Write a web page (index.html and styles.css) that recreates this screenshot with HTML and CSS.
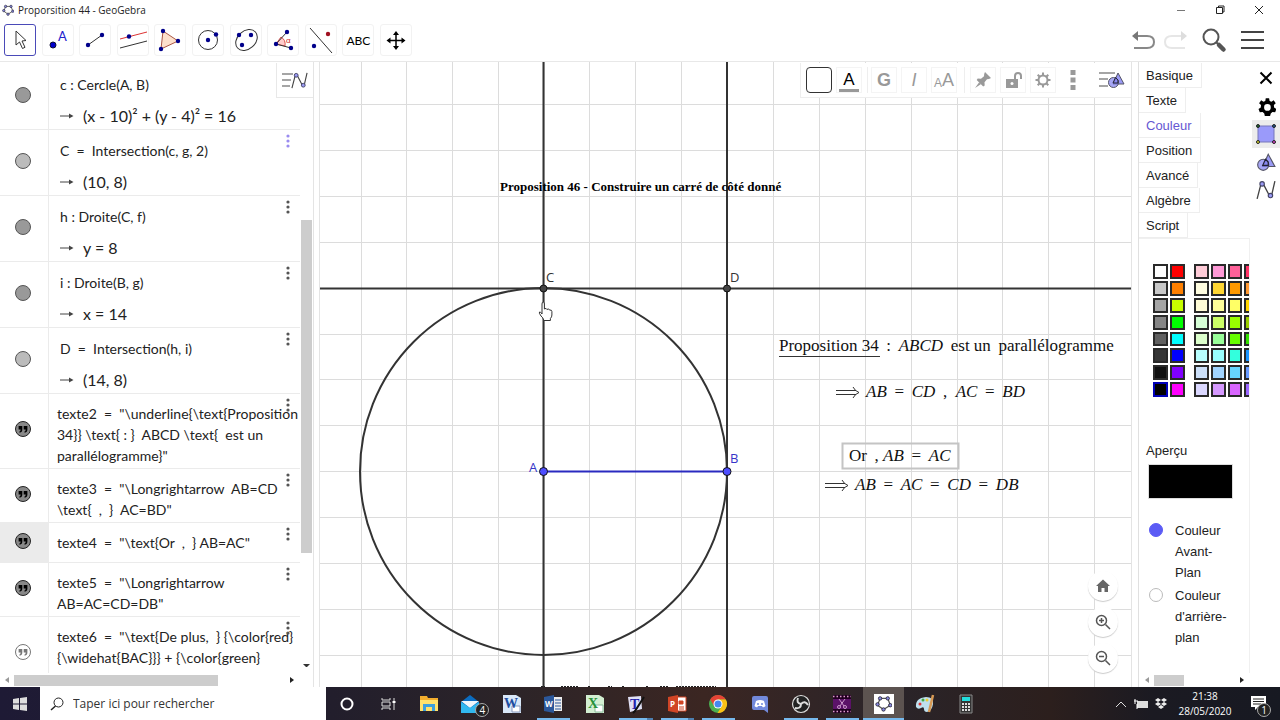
FILE: index.html
```html
<!DOCTYPE html>
<html lang="fr">
<head>
    <meta charset="UTF-8">
    <meta name="viewport" content="width=device-width, initial-scale=1.0">
    <title>Proporsition 44 - GeoGebra</title>
    <link rel="stylesheet" href="styles.css">
</head>
<body>
    <!-- Shared icons -->
    <svg class="sprite" aria-hidden="true">
        <symbol id="ggb" viewBox="0 0 20 20">
            <path d="M6 4 15 4 18 12 10 17 3 12Z" fill="none" stroke="#555" stroke-width="1.5"/>
            <g fill="#8a8ae0" stroke="#223" stroke-width="1"><circle cx="6" cy="4" r="2"/><circle cx="15" cy="4" r="2"/><circle cx="18" cy="12" r="2"/><circle cx="10" cy="17" r="2"/><circle cx="3" cy="11" r="2"/></g>
        </symbol>
        <symbol id="quote" viewBox="0 0 16 16">
            <path d="M3 4.500h4.200v4q0 3.200-3 3.700l-.5-1.200q1.600-.4 1.600-2.400H3zM8.800 4.500H13v4q0 3.200-3 3.700l-.5-1.200q1.600-.4 1.600-2.400H8.800z"/>
        </symbol>
        <symbol id="arrow" viewBox="0 0 14 8">
            <path d="M0 4h12" fill="none" stroke="#444"/><path d="M9 1.500 13.500 4 9 6.500Z" fill="#444"/>
        </symbol>
        <symbol id="dots" viewBox="0 0 4 14">
            <circle cx="2" cy="2" r="1.600"/><circle cx="2" cy="7" r="1.600"/><circle cx="2" cy="12" r="1.600"/>
        </symbol>
        <symbol id="shapes" viewBox="0 0 18 18">
            <path d="M11 2 17 13H6Z" fill="#9a9af5" stroke="#556"/><circle cx="6.500" cy="11.500" r="5" fill="#8080f0" fill-opacity=".7" stroke="#556"/><path d="M8.500 6.500 11 9v3H6Z" fill="none" stroke="#223"/>
        </symbol>
        <symbol id="curve" viewBox="0 0 18 18">
            <path d="M1 17 4.500 3.500h2L12 14h2L17 1" fill="none" stroke="#444" stroke-width="1.200" stroke-linejoin="round"/>
            <circle cx="5.500" cy="3.500" r="2" fill="#9a9af5" stroke="#446"/><circle cx="13" cy="14" r="2" fill="#9a9af5" stroke="#446"/>
        </symbol>
        <symbol id="gear" viewBox="0 0 24 24">
            <path fill-rule="evenodd" d="M10 1h4l.6 3.200 2.200 1L19.500 3.400 22 7l-2.300 2.200.3 2.800 2.800 1.800-1.500 4-3.300-.3-2 1.700L15 23H9l-.8-3.700-2-1.700-3.400.3-1.500-4L4 12l.3-2.800L2 7l2.500-3.600 2.700 1.800 2.200-1zM12 8a4 4 0 1 0 0 8 4 4 0 1 0 0-8z"/>
        </symbol>
    </svg>

    <header class="titlebar">
        <svg class="app-icon"><use href="#ggb"/></svg>
        <h1>Proporsition 44 - GeoGebra</h1>
        <div class="window-buttons">
            <button aria-label="Réduire"><svg width="10" height="10"><path d="M1 5.500h8" stroke="#777"/></svg></button>
            <button aria-label="Restaurer"><svg width="10" height="10"><path d="M1.500 2.500h6v6h-6zM3.500 2.500v-1.500h5.500v6h-1.500" fill="none" stroke="#222"/></svg></button>
            <button aria-label="Fermer"><svg width="10" height="10"><path d="M1 1l8 8M9 1L1 9" stroke="#222"/></svg></button>
        </div>
    </header>

    <nav class="toolbar">
        <div class="tools">
            <button class="selected" aria-label="Déplacer"><svg viewBox="0 0 30 30"><path d="M11 6v14l3.500-3 3 6.500 2.500-1.200-3-6.300 4-.5z" fill="#fff" stroke="#333"/></svg></button>
            <button aria-label="Point"><svg viewBox="0 0 30 30"><circle cx="10" cy="20" r="3" fill="#00c" stroke="#113"/><text class="tool-a" x="15" y="16">A</text></svg></button>
            <button aria-label="Segment"><svg viewBox="0 0 30 30"><path d="M8 20 22 10" stroke="#333"/><g fill="#00008b"><circle cx="8" cy="20" r="2.200"/><circle cx="22" cy="10" r="2.200"/></g></svg></button>
            <button aria-label="Parallèle"><svg viewBox="0 0 30 30"><path d="M2 14 29 7" stroke="#d33"/><path d="M2 23 29 16" stroke="#333"/><circle cx="11" cy="11.500" r="2.200" fill="#00008b"/></svg></button>
            <button aria-label="Polygone"><svg viewBox="0 0 30 30"><path d="M8 6 23 16 6 24Z" fill="#fde0cc" stroke="#a54"/><g fill="#00008b"><circle cx="8" cy="6" r="2.200"/><circle cx="23" cy="16" r="2.200"/><circle cx="6" cy="24" r="2.200"/></g></svg></button>
            <button aria-label="Cercle"><svg viewBox="0 0 30 30"><circle cx="15" cy="15" r="9.500" fill="none" stroke="#333"/><g fill="#00008b"><circle cx="15" cy="15" r="2.200"/><circle cx="23" cy="9.500" r="2.200"/></g></svg></button>
            <button aria-label="Ellipse"><svg viewBox="0 0 30 30"><ellipse cx="15.500" cy="15" rx="12" ry="9" transform="rotate(-42 15.500 15)" fill="none" stroke="#333"/><g fill="#00008b"><circle cx="8" cy="10" r="2.200"/><circle cx="20" cy="10" r="2.200"/><circle cx="11" cy="20" r="2.200"/></g></svg></button>
            <button aria-label="Angle"><svg viewBox="0 0 30 30"><path d="M8 19 13 12q5 3 4 9z" fill="#fcc" stroke="#d55"/><path d="M19 7 8 19 23 23" fill="none" stroke="#333"/><g fill="#00008b"><circle cx="19" cy="7" r="2.200"/><circle cx="8" cy="19" r="2.200"/><circle cx="23" cy="23" r="2.200"/></g><text class="tool-alpha" x="18" y="18">α</text></svg></button>
            <button aria-label="Symétrie"><svg viewBox="0 0 30 30"><path d="M4 3 26 28" stroke="#333"/><circle cx="22" cy="9" r="2.200" fill="#a01020"/><circle cx="8" cy="21" r="2.200" fill="#00008b"/></svg></button>
            <button aria-label="Texte" class="abc">ABC</button>
            <button aria-label="Déplacer la vue"><svg viewBox="0 0 30 30"><path d="M15 8v15M8 15.500h15" stroke="#000" stroke-width="1.500"/><path d="M15 6l3 4h-6zM15 25l3-4h-6zM5.500 15.500l4-3v6zM24.500 15.500l-4-3v6z"/></svg></button>
        </div>
        <div class="actions">
            <button aria-label="Annuler"><svg width="26" height="22" viewBox="0 0 26 22"><path d="M5 7h11q7 0 7 6t-7 6H3" fill="none" stroke="#888" stroke-width="2"/><path d="M1 7l6-5v10z" fill="#777"/></svg></button>
            <button aria-label="Rétablir"><svg width="26" height="22" viewBox="0 0 26 22"><path d="M19 7H9q-7 0-7 6t7 6h13" fill="none" stroke="#e6e6e6" stroke-width="2"/><path d="M24 7l-6-5v10z" fill="#ddd"/></svg></button>
            <button aria-label="Rechercher"><svg width="26" height="26" viewBox="0 0 26 26"><circle cx="10" cy="10" r="7.500" fill="none" stroke="#555" stroke-width="2"/><path d="M15 15l3 3" stroke="#555" stroke-width="2"/><path d="M18 18l4.500 4.500" stroke="#555" stroke-width="4.500" stroke-linecap="round"/></svg></button>
            <button aria-label="Menu"><svg width="26" height="20" viewBox="0 0 26 20"><path d="M2 2h23M2 10h23M2 18h23" stroke="#444" stroke-width="2"/></svg></button>
        </div>
    </nav>

    <main class="workspace">
        <section class="algebra">
            <div class="algebra-body">
                <ul class="rows">
                    <li class="row def"><i class="marble dark"></i><div>c : Cercle(A, B)<span class="value"><svg><use href="#arrow"/></svg>(x - 10)² + (y - 4)² = 16</span></div></li>
                    <li class="row def"><i class="marble"></i><div>C &nbsp;=&nbsp; Intersection(c, g, 2)<span class="value"><svg><use href="#arrow"/></svg>(10, 8)</span></div><button class="more active" aria-label="Plus"><svg><use href="#dots"/></svg></button></li>
                    <li class="row def"><i class="marble dark"></i><div>h : Droite(C, f)<span class="value"><svg><use href="#arrow"/></svg>y = 8</span></div><button class="more" aria-label="Plus"><svg><use href="#dots"/></svg></button></li>
                    <li class="row def"><i class="marble dark"></i><div>i : Droite(B, g)<span class="value"><svg><use href="#arrow"/></svg>x = 14</span></div><button class="more" aria-label="Plus"><svg><use href="#dots"/></svg></button></li>
                    <li class="row def"><i class="marble"></i><div>D &nbsp;=&nbsp; Intersection(h, i)<span class="value"><svg><use href="#arrow"/></svg>(14, 8)</span></div><button class="more" aria-label="Plus"><svg><use href="#dots"/></svg></button></li>
                    <li class="row"><i class="marble text"><svg><use href="#quote"/></svg></i><div>texte2 &nbsp;= &nbsp;"\underline{\text{Proposition<br>34}} \text{ : } &nbsp;ABCD \text{ &nbsp;est un<br>parallélogramme}"</div><button class="more" aria-label="Plus"><svg><use href="#dots"/></svg></button></li>
                    <li class="row"><i class="marble text"><svg><use href="#quote"/></svg></i><div>texte3 &nbsp;= &nbsp;"\Longrightarrow &nbsp;AB=CD<br>\text{ &nbsp;, &nbsp;} &nbsp;AC=BD"</div><button class="more" aria-label="Plus"><svg><use href="#dots"/></svg></button></li>
                    <li class="row current"><i class="marble text"><svg><use href="#quote"/></svg></i><div>texte4 &nbsp;= &nbsp;"\text{Or &nbsp;, &nbsp;} AB=AC"</div><button class="more" aria-label="Plus"><svg><use href="#dots"/></svg></button></li>
                    <li class="row"><i class="marble text"><svg><use href="#quote"/></svg></i><div>texte5 &nbsp;= &nbsp;"\Longrightarrow<br>AB=AC=CD=DB"</div><button class="more" aria-label="Plus"><svg><use href="#dots"/></svg></button></li>
                    <li class="row"><i class="marble text off"><svg><use href="#quote"/></svg></i><div>texte6 &nbsp;= &nbsp;"\text{De plus, &nbsp;} {\color{red}<br>{\widehat{BAC}}} + {\color{green}<br>{\widehat{ACD}}} = 180^{\circ}"</div><button class="more" aria-label="Plus"><svg><use href="#dots"/></svg></button></li>
                </ul>
                <div class="vscroll"><span class="thumb"></span><span class="down"></span></div>
            </div>
            <div class="hscroll"><span class="left"></span><span class="thumb"></span><span class="right"></span></div>
            <button class="algebra-style" aria-label="Barre de style"><svg width="28" height="20" viewBox="0 0 28 20"><path d="M1 4h11M1 10h9M1 16h8" stroke="#888" stroke-width="1.500"/><use href="#curve" x="10" y="2" width="17" height="17"/></svg></button>
        </section>

        <section class="graphics">
            <svg class="plane">
                <path class="grid" d="M41.500 0v700M86.500 0v700M132.500 0v700M178.500 0v700M224.500 0v700M269.500 0v700M315.500 0v700M361.500 0v700M407.500 0v700M453.500 0v700M499.500 0v700M545.500 0v700M591.500 0v700M637.500 0v700M682.500 0v700M728.500 0v700M774.500 0v700"/>
                <path class="grid" d="M0 42.500h2000M0 88.500h2000M0 134.500h2000M0 180.500h2000M0 226.500h2000M0 272.500h2000M0 317.500h2000M0 363.500h2000M0 409.500h2000M0 455.500h2000M0 501.500h2000M0 547.500h2000M0 593.500h2000"/>
                <path class="line" d="M223.500 0v700M407 0v700M0 226.500h2000"/>
                <circle class="line" cx="223.500" cy="409.500" r="183.500"/>
                <path class="segment" d="M223.500 409.500h183.500"/>
                <g class="point"><circle cx="223.500" cy="226.500" r="3.500"/><circle cx="407" cy="226.500" r="3.500"/></g>
                <g class="point free"><circle cx="223.500" cy="409.500" r="4"/><circle cx="407" cy="409.500" r="4"/></g>
                <g class="label"><text x="226" y="220">C</text><text x="410" y="220">D</text></g>
                <g class="label free"><text x="209" y="410">A</text><text x="410" y="401">B</text></g>
                <text class="heading" x="180" y="129">Proposition 46 - Construire un carré de côté donné</text>
                <rect class="frame" x="522.500" y="381.500" width="116" height="25"/>
                <g class="math">
                    <text x="459" y="289">Proposition 34 &#8201;:&#8201; <tspan class="var">ABCD</tspan>&#8201; est un&#8201; parallélogramme</text>
                    <text x="546" y="335"><tspan class="var">AB</tspan>&#8201; =&#8201; <tspan class="var">CD</tspan> &#8201;, &#160;<tspan class="var">AC</tspan>&#8201; =&#8201; <tspan class="var">BD</tspan></text>
                    <text x="529" y="399">Or&#8201; , <tspan class="var">AB</tspan>&#8201; =&#8201; <tspan class="var">AC</tspan></text>
                    <text x="535" y="428"><tspan class="var">AB</tspan>&#8201; =&#8201; <tspan class="var">AC</tspan>&#8201; =&#8201; <tspan class="var">CD</tspan>&#8201; =&#8201; <tspan class="var">DB</tspan></text>
                </g>
                <path class="implies" d="M459 294.500h101M516 328.500h20M516 332.500h20M533 325q2 4 6 5.500q-4 1.500-6 5.500M505 421.500h20M505 425.500h20M522 418q2 4 6 5.500q-4 1.500-6 5.500"/>
                <path class="cut" d="M221 624.500h4M241 624.500h18M268 624.500h3M288 624.500h4M302 624.500h3M326 624.500h3M340 624.500h9M356 624.500h40"/>
                <path class="hand" d="M222 252v-10q0-2 1.200-2t1.200 2v5q2-1.500 2.500.5q2-1.500 2.700.6q2-.6 2.300 1.400v3.500q0 2-1.500 3.500v2h-6.400q-1-3-3-4.500q-2.500-3.500-1.500-4t2.500 2z"/>
            </svg>

            <div class="stylebar">
                <div class="group">
                    <button class="swatch" aria-label="Couleur de fond"></button>
                    <button class="text-color" aria-label="Couleur du texte">A</button>
                </div>
                <div class="group format">
                    <button class="bold">G</button>
                    <button class="italic">I</button>
                    <button class="size" aria-label="Taille"><small>A</small>A</button>
                </div>
                <div class="group object">
                    <button aria-label="Épingler"><svg viewBox="0 0 20 20"><path d="M12 2l6 6-2 1-2 .2-2.500 3 .2 3.300-1.500 1L3.700 10l1-1.500 3.300.3 3-2.500.2-2.300zM6 12.500l1.800 1.700L2 18z"/></svg></button>
                    <button aria-label="Verrouiller"><svg viewBox="0 0 20 20"><path d="M3 9h12v9H3z"/><path d="M12 9V6q0-3 3-3t3 3v3" fill="none" stroke="#999" stroke-width="2"/><circle cx="9" cy="13.500" r="1.500" fill="#fff"/></svg></button>
                    <button aria-label="Réglages"><svg viewBox="0 0 20 20"><g fill="none" stroke="#999"><circle cx="10" cy="10" r="4.500" stroke-width="2"/><path d="M10 2.500v3M10 14.500v3M2.500 10h3M14.500 10h3M4.700 4.700l2 2M13.300 13.300l2 2M15.300 4.700l-2 2M6.700 13.300l-2 2" stroke-width="2"/></g></svg></button>
                    <button class="bare" aria-label="Plus"><svg viewBox="0 0 20 20"><path d="M7.500 0h5v5h-5zM7.500 7.500h5v5h-5zM7.500 15h5v5h-5z"/></svg></button>
                </div>
                <button class="bare view" aria-label="Barre de style"><svg width="26" height="20" viewBox="0 0 26 20"><path d="M0 3h16M0 9h9M0 16h9" stroke="#888" stroke-width="1.500"/><use href="#shapes" x="8" y="1" width="18" height="18"/></svg></button>
            </div>

            <div class="zoom-buttons">
                <button aria-label="Vue standard"><svg viewBox="0 0 16 16"><path d="M8 1.500 15 8h-2v6H9.500v-4h-3v4H3V8H1z" fill="#666"/></svg></button>
                <button aria-label="Zoom avant"><svg viewBox="0 0 16 16"><path d="M6.500 4v5M4 6.500h5M10.500 10.500l4.500 4.500" stroke="#555" stroke-width="1.500"/><circle cx="6.500" cy="6.500" r="5" fill="none" stroke="#555" stroke-width="1.500"/></svg></button>
                <button aria-label="Zoom arrière"><svg viewBox="0 0 16 16"><path d="M4 6.500h5M10.500 10.500l4.500 4.500" stroke="#555" stroke-width="1.500"/><circle cx="6.500" cy="6.500" r="5" fill="none" stroke="#555" stroke-width="1.500"/></svg></button>
            </div>
        </section>

        <aside class="settings">
            <div class="properties">
                <div class="tabs">
                    <button>Basique</button>
                    <button>Texte</button>
                    <button class="active">Couleur</button>
                    <button>Position</button>
                    <button>Avancé</button>
                    <button>Algèbre</button>
                    <button>Script</button>
                </div>
                <div class="tab-content">
                    <div class="palette">
                        <div class="colors" id="mainColors"></div>
                        <div class="colors wide" id="moreColors"></div>
                    </div>
                    <p class="preview-title">Aperçu</p>
                    <div class="preview"></div>
                    <label class="choice"><input type="radio" name="layer" checked><span>Couleur Avant-Plan</span></label>
                    <label class="choice"><input type="radio" name="layer"><span>Couleur d'arrière-plan</span></label>
                </div>
                <div class="hscroll"><span class="left"></span><span class="thumb"></span><span class="right"></span></div>
            </div>
            <nav class="views">
                <button aria-label="Fermer"><svg viewBox="0 0 20 20"><path d="M4.500 4.500l11 11M15.500 4.500l-11 11" stroke="#000" stroke-width="2"/></svg></button>
                <button aria-label="Préférences"><svg viewBox="-2 -2 28 28"><use href="#gear"/></svg></button>
                <button class="active" aria-label="Objets"><svg viewBox="0 0 20 20"><path d="M2 2h16v16H2z" fill="#9a9afa" stroke="#77b"/><circle cx="2" cy="2" r="1.500" fill="#263" stroke="#222"/><circle cx="18" cy="2" r="1.500" fill="#258" stroke="#222"/><circle cx="2" cy="18" r="1.500" fill="#dd3" stroke="#222"/><circle cx="18" cy="18" r="1.500" fill="#d4c" stroke="#222"/></svg></button>
                <button aria-label="Graphique"><svg viewBox="0 0 18 18"><use href="#shapes"/></svg></button>
                <button aria-label="Algèbre"><svg viewBox="0 0 18 18"><use href="#curve"/></svg></button>
            </nav>
        </aside>
    </main>

    <footer class="taskbar">
        <button class="start" aria-label="Démarrer"><svg width="14" height="14"><path d="M0 2l6-1v5.500H0zM7 1l7-1v6.500H7zM0 7.500h6V13l-6-1zM7 7.500h7V14l-7-1z" fill="#ddd"/></svg></button>
        <label class="search">
            <svg width="14" height="14"><circle cx="8.500" cy="5.500" r="4.500" fill="none" stroke="#222"/><path d="M5.500 9 1 13" stroke="#222" stroke-width="1.500"/></svg>
            <input type="text" placeholder="Taper ici pour rechercher" aria-label="Rechercher">
        </label>
        <div class="apps">
            <button aria-label="Cortana"><svg viewBox="0 0 20 20"><circle cx="10" cy="10" r="5.500" fill="none" stroke="#fff" stroke-width="2"/></svg></button>
            <button aria-label="Vue des tâches"><svg viewBox="0 0 20 20"><path d="M4 4v2h8V4M4 16v-2h8v2M4 8h8v4H4zM16 4v12" fill="none" stroke="#ddd"/><path d="M14.500 7h3v2h-3z" fill="#fff"/></svg></button>
            <button aria-label="Explorateur"><svg viewBox="0 0 20 20"><path d="M1 2h7l1 2h10v13H1z" fill="#f2ae2e"/><path d="M1 6h18v11H1z" fill="#ffe16b"/><path d="M4 10h12v7h-3v-4H7v4H4z" fill="#3c9fdc"/></svg></button>
            <button aria-label="Courrier"><svg viewBox="0 0 20 20"><path d="M0 8 9 1l9 7v11H0z" fill="#0b6cc0"/><path d="M0 7h18L9 14z" fill="#eef6fb"/><path d="M0 8l9 6 9-6v11H0z" fill="#31b8ef"/></svg><span class="badge">4</span></button>
            <button aria-label="Word 2010"><svg viewBox="0 0 20 20"><path d="M1 1h13l5 3v15H1z" fill="#d9e8f8"/><path d="M10 12h8v6h-8z" fill="#fff" stroke="#89b"/><text class="glyph" x="2" y="14" fill="#1d4da0">W</text></svg></button>
            <button class="running" aria-label="Word"><svg viewBox="0 0 20 20"><path d="M10 3h9v14h-9z" fill="#eee"/><path d="M12 6h6M12 9h6M12 12h6M12 15h6" stroke="#2b579a"/><path d="M1 3l10-2v18L1 17z" fill="#2b579a"/><text class="mini" x="2" y="13" fill="#fff">W</text></svg></button>
            <button aria-label="Excel"><svg viewBox="0 0 20 20"><path d="M1 1h13l5 3v15H1z" fill="#d3efd2"/><path d="M10 11h8v7h-8z" fill="#fff" stroke="#8b9"/><text class="glyph" x="3" y="14" fill="#27923a">X</text></svg></button>
            <button class="running stacked" aria-label="TeXstudio"><svg viewBox="0 0 20 20"><path d="M2 3l13-1 1 13-12 3z" fill="#dfe0f5"/><text class="glyph" x="4" y="15" fill="#22a">T</text><path d="M18 3 9 17l-2 2" fill="none" stroke="#111" stroke-width="2"/></svg></button>
            <button class="running stacked" aria-label="PowerPoint"><svg viewBox="0 0 20 20"><path d="M10 3h9v14h-9z" fill="#fff" stroke="#d04525"/><path d="M12 7h4v3h-4zM12 13h5M12 15h5" fill="#d04525" stroke="#d04525"/><path d="M1 3l10-2v18L1 17z" fill="#d04525"/><text class="mini" x="3" y="13" fill="#fff">P</text></svg></button>
            <button class="running" aria-label="Chrome"><svg viewBox="0 0 20 20"><circle cx="10" cy="10" r="9" fill="#4caf50"/><path d="M2.200 5.500A9 9 0 0 1 17.800 5.500H10L6 12z" fill="#e54335"/><path d="M17.800 5.500A9 9 0 0 1 9.500 19L14 12 10 5.500z" fill="#fbc116"/><circle cx="10" cy="10" r="4.500" fill="#fff"/><circle cx="10" cy="10" r="3.500" fill="#4688f1"/></svg></button>
            <button aria-label="Discord"><svg viewBox="0 0 20 20"><path d="M4 2h12q2 0 2 2v15l-4-3H4q-2 0-2-2V4q0-2 2-2z" fill="#7289da"/><path d="M6 7q4-2 8 0l1.500 5q-2 2-3 1l-.5-1H8l-.5 1q-1 1-3-1z" fill="#fff"/><circle cx="8" cy="10" r="1" fill="#7289da"/><circle cx="12" cy="10" r="1" fill="#7289da"/></svg></button>
            <button class="running" aria-label="OBS"><svg viewBox="0 0 20 20"><circle cx="10" cy="10" r="8.500" fill="#222" stroke="#ddd" stroke-width="1.200"/><path d="M10 10Q5 9 7 4M10 10q4-4 7 1M10 10q0 5-6 4" fill="none" stroke="#ddd" stroke-width="2"/></svg></button>
            <button class="running" aria-label="Montage vidéo"><svg viewBox="0 0 20 20"><path d="M1 1h18v18H1z" fill="#200020"/><path d="M1 2.500h18M1 17.500h18" stroke="#d9c" stroke-width="1.500" stroke-dasharray="1.500 2"/><path d="M1 5h18v10H1z" fill="#5b1268"/><path d="M7 5l5 7M13 5l-5 7" stroke="#c9c"/><g fill="none" stroke="#c9c"><circle cx="7" cy="13" r="1.500"/><circle cx="13" cy="13" r="1.500"/></g></svg></button>
            <button class="running focused" aria-label="GeoGebra"><svg viewBox="0 0 20 20"><path d="M0 0h20v20H0z" fill="#fff"/><use href="#ggb" x="1" y="1" width="17" height="17"/></svg></button>
            <button aria-label="Paint"><svg viewBox="0 0 20 20"><path d="M1 13Q0 4 11 3q8 0 7 7t-6 8q-3 0-3-3t-3-1-5-1z" fill="#bfe0ee"/><circle cx="5" cy="10" r="1.500" fill="#d33"/><circle cx="8" cy="6" r="1.500" fill="#4a4"/><circle cx="12" cy="6" r="1.500" fill="#ec3"/><path d="M18 1 14 18" stroke="#d89a55" stroke-width="2.500"/></svg></button>
            <button aria-label="Calculatrice"><svg viewBox="0 0 20 20"><path d="M4 1h12v18H4z" fill="#333" stroke="#888"/><path d="M6 3h8v4H6z" fill="#2dd"/><path d="M6 10h8M6 13h8M6 16h8" stroke="#ddd" stroke-width="2" stroke-dasharray="2 1"/></svg></button>
        </div>
        <div class="tray">
            <svg width="12" height="8"><path d="M1 7l5-5 5 5" fill="none" stroke="#ddd"/></svg>
            <svg width="14" height="12"><path d="M3 3h11v7H3z" fill="#ddd"/><path d="M1 1v5M0 3h4M3 6v5" stroke="#fff"/></svg>
            <svg width="12" height="12"><path d="M3 0l3 2-3 2-3-2zM9 0l3 2-3 2-3-2zM3 4l3 2-3 2-3-2zM9 4l3 2-3 2-3-2zM6 7l3 2-3 2-3-2z" fill="#eee"/></svg>
            <time>21:38<br>28/05/2020</time>
            <button class="notes" aria-label="Notifications"><svg width="15" height="15"><path d="M0 0h15v11H7l-3 3v-3H0z" fill="#fff"/><path d="M2 3h11M2 5.500h11M2 8h8" stroke="#222"/></svg><span class="badge">1</span></button>
        </div>
    </footer>

    <script>
        const mainColors = [
            '#ffffff', '#ff0000', '#c8c8c8', '#ff8000', '#a5a5a5', '#c8ff00', '#858585', '#00ff00',
            '#606060', '#00ffff', '#363636', '#0000ff', '#101010', '#8000ff', '#000000', '#ff00ff'
        ];
        const moreColors = [
            '#ffccd8', '#ff99d6', '#ff6199', '#ff3366',
            '#fffde0', '#ffd633', '#ff9900', '#ff9933',
            '#fffcd6', '#ffff99', '#ffff66', '#ffd500',
            '#d6ffd6', '#ccff66', '#99ff00', '#99cc00',
            '#dcffcc', '#99ff99', '#66ff00', '#33e000',
            '#b8ffff', '#99ffff', '#33ffdd', '#1a94ff',
            '#cce0fa', '#a0d4ff', '#66d5ff', '#6699ff',
            '#dbd8ff', '#d699ff', '#d966ff', '#9966ff'
        ];

        function fillColors(id, colors) {
            const box = document.getElementById(id);
            colors.forEach(color => {
                const cell = document.createElement('button');
                cell.style.backgroundColor = color;
                cell.setAttribute('aria-label', color);
                if (color === '#000000') {
                    cell.classList.add('selected');
                }
                box.appendChild(cell);
            });
        }

        fillColors('mainColors', mainColors);
        fillColors('moreColors', moreColors);
    </script>
</body>
</html>
```
FILE: styles.css
```css
* {
    box-sizing: border-box;
}

body {
    margin: 0;
    height: 100vh;
    display: flex;
    flex-direction: column;
    overflow: hidden;
    background-color: #fff;
    color: #222;
    font-family: "Liberation Sans", Arial, sans-serif;
    font-size: 13px;
}

button {
    padding: 0;
    border: none;
    background: none;
    color: inherit;
    font: inherit;
    display: flex;
    align-items: center;
    justify-content: center;
}

.sprite {
    position: absolute;
    width: 0;
    height: 0;
}

/* Title bar */
.titlebar {
    height: 20px;
    display: flex;
    align-items: center;
    padding: 0 2px;
}

.app-icon {
    width: 12px;
    height: 12px;
    margin-right: 4px;
}

.titlebar h1 {
    margin: 0;
    font-family: "Open Sans", sans-serif;
    font-size: 10px;
    font-weight: normal;
}

.window-buttons {
    margin-left: auto;
    display: flex;
}

.window-buttons button {
    width: 39px;
    height: 20px;
}

/* Toolbar */
.toolbar {
    height: 42px;
    display: flex;
    justify-content: space-between;
    align-items: center;
    padding: 0 15px 1px 4px;
    border-bottom: 1px solid #e8e8e8;
}

.tools {
    width: 408px;
    display: flex;
    justify-content: space-between;
}

.tools button {
    width: 32px;
    height: 32px;
    border: 1px solid #f2f2f2;
    border-radius: 3px;
}

.tools svg {
    width: 30px;
    height: 30px;
}

.tools .selected {
    border-color: #4a4ab8;
}

.tools .abc {
    font-family: Lato, sans-serif;
    font-size: 12px;
    color: #000;
}

.tool-a {
    font-family: Lato, sans-serif;
    font-size: 13px;
    fill: #22c;
}

.tool-alpha {
    font-size: 8px;
    fill: #c22;
}

.actions {
    display: flex;
    align-items: center;
    gap: 6px;
}

.actions button:nth-child(n+3) {
    margin-left: 6px;
}

/* Workspace */
.workspace {
    flex: 1;
    min-height: 0;
    display: flex;
}

.algebra {
    position: relative;
    width: 314px;
    border-right: 1px solid #e4e4e4;
    display: flex;
    flex-direction: column;
}

.algebra-body {
    flex: 1;
    min-height: 0;
    display: flex;
}

.rows {
    flex: 1;
    margin: 0;
    padding: 2px 0 0;
    list-style: none;
    overflow: hidden;
    font-family: Lato, sans-serif;
    font-size: 14px;
    line-height: 21px;
}

.row {
    position: relative;
    display: flex;
    min-height: 40px;
    border-bottom: 1px solid #ebebeb;
    white-space: nowrap;
}

.row::before {
    content: "";
    position: absolute;
    top: 0;
    bottom: 0;
    left: 0;
    width: 48px;
    border-right: 1px solid #ebebeb;
}

.row.current::before {
    background-color: #ebebeb;
}

.row div {
    padding: 9px 0 2px 57px;
}

.row.def {
    height: 66px;
}

.row.def div {
    padding: 5px 0 0 60px;
    line-height: 31px;
}

.value {
    display: flex;
    align-items: center;
    gap: 9px;
    font-size: 16px;
}

.value svg {
    width: 14px;
    height: 8px;
}

.marble {
    position: absolute;
    left: 15px;
    top: calc(50% - 10px);
    width: 16px;
    height: 16px;
    border: 1px solid #555;
    border-radius: 50%;
    background-color: #bbb;
}

.marble.dark {
    background-color: #999;
}

.marble.text {
    background-color: #888;
    border-color: #222;
}

.marble.off {
    background-color: #fff;
    border-color: #777;
    fill: #777;
}

.marble svg {
    display: block;
    width: 14px;
    height: 14px;
}

.more {
    position: absolute;
    top: 4px;
    right: 10px;
    fill: #555;
}

.more.active {
    fill: #9a8cf0;
}

.more svg {
    width: 4px;
    height: 14px;
}

.algebra-style {
    position: absolute;
    top: 1px;
    right: 0;
    width: 37px;
    height: 35px;
    background-color: #fff;
    border: 1px solid #e8e8e8;
    border-width: 0 0 1px 1px;
}

/* Scroll bars */
.vscroll {
    width: 13px;
    display: flex;
    flex-direction: column;
}

.vscroll .thumb {
    width: 11px;
    height: 333px;
    margin: 158px 0 auto 1px;
    background-color: #cdcdcd;
}

.down {
    margin: 0 3px 6px;
    border: 3px solid transparent;
    border-top-color: #333;
    border-bottom: none;
}

.hscroll {
    height: 14px;
    flex: none;
    display: flex;
    align-items: center;
    padding: 0 19px 0 5px;
}

.hscroll .thumb {
    width: 204px;
    height: 11px;
    margin: 0 auto 0 5px;
    background-color: #cdcdcd;
}

.left,
.right {
    border: 3px solid transparent;
    border-right: 4px solid #999;
    border-left: none;
}

.right {
    border-right: none;
    border-left: 4px solid #222;
}

/* Graphics view */
.graphics {
    position: relative;
    flex: 1;
    margin: 0 6px 0 5px;
    border: 1px solid #e4e4e4;
    border-width: 0 1px 0 1px;
    overflow: hidden;
}

.plane {
    display: block;
    width: 100%;
    height: 100%;
}

.grid {
    stroke: #dcdcdc;
}

.line {
    fill: none;
    stroke: #333;
    stroke-width: 2;
}

.segment {
    stroke: #2a2ac0;
    stroke-width: 2;
}

.point {
    fill: #444;
    stroke: #111;
}

.point.free {
    fill: #4d4dff;
}

.label {
    font-family: "Open Sans", sans-serif;
    font-size: 13px;
    fill: #333;
}

.label.free {
    fill: #3535c8;
}

.heading {
    font-family: "Liberation Serif", serif;
    font-size: 13px;
    font-weight: bold;
    fill: #000;
}

.math {
    font-family: "Liberation Serif", serif;
    font-size: 17px;
    fill: #111;
}

.var {
    font-style: italic;
}

.frame {
    fill: none;
    stroke: #c4c4c4;
    stroke-width: 2;
}

.implies {
    fill: none;
    stroke: #333;
}

.cut {
    stroke: #222;
    stroke-width: 1;
    stroke-dasharray: 2 1;
}

.hand {
    fill: #fff;
    stroke: #333;
}

.stylebar {
    position: absolute;
    top: 1px;
    right: 0;
    width: 331px;
    height: 35px;
    display: flex;
    align-items: center;
    padding-left: 5px;
    background-color: #fff;
    border: 1px solid #eee;
    border-width: 0 0 1px 1px;
    color: #999;
    fill: #999;
}

.group {
    display: flex;
    gap: 4px;
}

.group.format {
    margin-left: 5px;
    padding-left: 3px;
    border-left: 1px solid #eee;
}

.group.object {
    margin-left: 7px;
    padding-left: 5px;
    border-left: 1px solid #eee;
}

.stylebar button {
    width: 26px;
    height: 26px;
    border: 1px solid #f4f4f4;
}

.stylebar .bare {
    border: none;
}

.stylebar .view {
    margin: 0 6px 0 auto;
}

.group svg {
    width: 20px;
    height: 20px;
}

.stylebar .swatch {
    border: 1px solid #333;
    border-radius: 4px;
}

.stylebar .text-color {
    color: #000;
    font-size: 17px;
}

.text-color::after {
    content: "";
    position: absolute;
    width: 20px;
    height: 3px;
    margin-top: 20px;
    background-color: #999;
}

.bold {
    font-size: 18px;
    font-weight: bold;
}

.italic {
    font-size: 18px;
    font-style: italic;
}

.size {
    font-size: 18px;
}

.size small {
    font-size: 12px;
    padding-top: 5px;
}

.zoom-buttons {
    position: absolute;
    right: 13px;
    bottom: 14px;
    display: flex;
    flex-direction: column;
    gap: 6px;
}

.zoom-buttons button {
    width: 30px;
    height: 30px;
    border-radius: 50%;
    background-color: #fff;
    box-shadow: 0 1px 1px #ccc;
}

.zoom-buttons svg {
    width: 16px;
    height: 16px;
}

/* Settings */
.settings {
    width: 142px;
    border-left: 1px solid #e0e0e0;
    display: flex;
}

.properties {
    width: 111px;
    display: flex;
    flex-direction: column;
    overflow: hidden;
}

.tabs {
    display: flex;
    flex-direction: column;
    align-items: flex-start;
    padding-top: 1px;
}

.tabs button {
    height: 25px;
    padding: 0 8px 0 7px;
    border: 1px solid #eee;
    border-width: 0 1px 1px 0;
}

.tabs .active {
    color: #6557d2;
}

.tab-content {
    flex: 1;
    border: 1px solid #f0f0f0;
    border-width: 1px 1px 0 0;
}

.palette {
    display: flex;
    gap: 9px;
    margin: 25px 0 0 14px;
    overflow: hidden;
}

.colors {
    flex: none;
    width: 32px;
    height: 133px;
    display: grid;
    grid-template-columns: repeat(2, 1fr);
    grid-auto-rows: 1fr;
    gap: 2px;
}

.colors.wide {
    width: 65px;
    grid-template-columns: repeat(4, 1fr);
}

.colors button {
    border: 2px solid #2a2a2a;
}

.colors .selected {
    border-color: #0000b8;
}

.preview-title {
    margin: 45px 0 4px 7px;
    line-height: 18px;
}

.preview {
    width: 85px;
    height: 35px;
    margin: 0 0 21px 9px;
    border: 1px solid #ddd;
    background-color: #000;
}

.choice {
    display: flex;
    margin: 0 0 2px 10px;
    line-height: 21px;
}

.choice span {
    width: 60px;
}

.choice input {
    appearance: none;
    width: 14px;
    height: 14px;
    margin: 3px 12px 0 0;
    border: 1px solid #bbb;
    border-radius: 50%;
}

.choice input:checked {
    background-color: #5b5bf5;
    border-color: #5b5bf5;
}

.properties .hscroll {
    padding: 0 6px;
}

.properties .thumb {
    width: 30px;
}

.views {
    flex: 1;
    display: flex;
    flex-direction: column;
    align-items: center;
    padding: 2px 0 0 2px;
}

.views button {
    width: 28px;
    height: 28px;
}

.views .active {
    background-color: #ececec;
}

.views svg {
    width: 20px;
    height: 20px;
}

/* Windows task bar */
.taskbar {
    height: 33px;
    display: flex;
    background: linear-gradient(90deg, #1e1a35 0%, #221e2c 26%, #2c2428 40%, #3b2622 55%, #2a2429 70%, #2c1f1d 82%, #1b1a22 90%, #171922 100%);
    color: #fff;
    font-family: "Open Sans", sans-serif;
}

.start {
    width: 40px;
}

.search {
    width: 286px;
    display: flex;
    align-items: center;
    padding-left: 10px;
    background-color: #fff;
}

.search input {
    flex: 1;
    min-width: 0;
    padding: 0 0 0 9px;
    border: none;
    background: none;
    font-family: inherit;
    font-size: 12px;
}

.search input::placeholder {
    color: #333;
}

.apps {
    width: 661px;
    display: flex;
}

.apps button {
    position: relative;
    flex: 1;
}

.apps svg {
    width: 20px;
    height: 20px;
}

.running::after {
    content: "";
    position: absolute;
    left: 4px;
    right: 4px;
    bottom: 0;
    height: 2px;
    background-color: #76b9ed;
}

.running.stacked::after {
    border-right: 6px solid #4d7fb0;
}

.focused {
    background-color: #5c5350;
}

.running.focused::after {
    left: 0;
    right: 0;
}

.glyph {
    font-family: "Liberation Serif", serif;
    font-size: 14px;
    font-weight: bold;
}

.mini {
    font-size: 8px;
    font-weight: bold;
}

.badge {
    position: absolute;
    right: 2px;
    bottom: 3px;
    width: 14px;
    height: 14px;
    border: 1px solid #aaa;
    border-radius: 50%;
    background-color: #222;
    font-size: 10px;
    line-height: 12px;
    text-align: center;
}

.tray {
    margin-left: auto;
    display: flex;
    align-items: center;
    gap: 7px;
    padding-right: 7px;
}

.tray time {
    width: 62px;
    font-size: 10px;
    line-height: 15px;
    text-align: center;
    white-space: nowrap;
}

.notes {
    position: relative;
    width: 30px;
    height: 33px;
}
```
